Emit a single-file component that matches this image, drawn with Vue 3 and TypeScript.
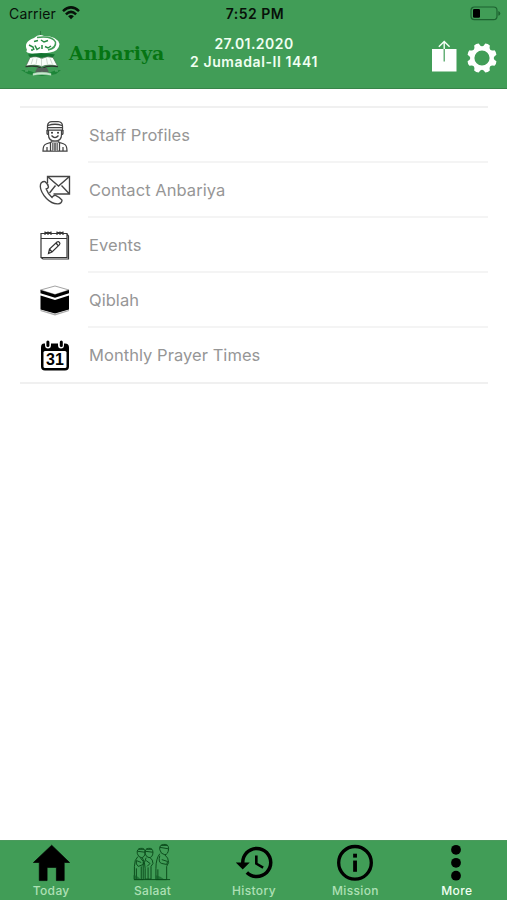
<script setup lang="ts">
type IconName = 'staff' | 'contact' | 'events' | 'qiblah' | 'calendar'

interface MenuItem {
  label: string
  icon: IconName
}

const menu: MenuItem[] = [
  { label: 'Staff Profiles', icon: 'staff' },
  { label: 'Contact Anbariya', icon: 'contact' },
  { label: 'Events', icon: 'events' },
  { label: 'Qiblah', icon: 'qiblah' },
  { label: 'Monthly Prayer Times', icon: 'calendar' },
]

const tabs = ['Today', 'Salaat', 'History', 'Mission', 'More']
const activeTab = 'More'

// Eight-toothed gear outline centred in a 30x30 box.
function gearPath(): string {
  const pt = (deg: number, r: number): string => {
    const a = ((deg - 90) * Math.PI) / 180
    return `${(15 + r * Math.cos(a)).toFixed(2)} ${(15 + r * Math.sin(a)).toFixed(2)}`
  }
  let d = `M${pt(0, 11.7)}`
  for (let i = 0; i < 8; i++) {
    const c = i * 45 + 22.5
    d += `Q${pt(c - 14, 11.8)} ${pt(c - 9.5, 14.8)}Q${pt(c, 15.6)} ${pt(c + 9.5, 14.8)}Q${pt(c + 14, 11.8)} ${pt(c + 22.5, 11.7)}`
  }
  return d + 'ZM22.6 15a7.6 7.6 0 1 0-15.2 0a7.6 7.6 0 1 0 15.2 0Z'
}
const gear = gearPath()
</script>

<template>
  <div class="screen">
    <header class="header">
      <div class="status">
        <div class="carrier">
          <span>Carrier</span>
          <svg class="wifi" viewBox="0 0 18 14" width="18" height="14">
            <g fill="none" stroke="#071109" stroke-width="2.5">
              <path d="M1 5.1Q9-2.3 17 5.1" />
              <path d="M3.9 8.3Q9 3.4 14.1 8.3" />
            </g>
            <path d="M6.1 10.2Q9 7.8 11.9 10.2L9 13.3Z" fill="#071109" />
          </svg>
        </div>
        <div class="clock">7:52 PM</div>
        <svg class="battery" viewBox="0 0 31 15" width="31" height="15">
          <rect x="1" y="1" width="26" height="12.6" rx="3.4" fill="none" stroke="#1d6230" stroke-width="1.2" />
          <rect x="3" y="3" width="7" height="8.7" rx="1.3" fill="#000" />
          <path d="M28.3 5v4.8q2-.7 2-2.4t-2-2.4Z" fill="#1d6230" />
        </svg>
      </div>
      <div class="titlebar">
        <div class="brand">
          <svg class="crest" viewBox="0 0 44 50" width="44" height="50">
            <path d="M20.500 3v5" stroke="#2c7a40" stroke-width="1" />
            <path d="M7 22Q3 14 14 10Q19 5 24 8Q37 8 39.500 16Q39 23 30 24.500Q17 27 9 25Q5 24 7 22Z" fill="#fff" />
            <path d="M17 9.500Q32 7.500 35.500 14Q36.500 20 28 22" fill="none" stroke="#419d57" stroke-width="1.500" />
            <path d="M9 17l4 2 1 3M15 17.500l2 4 3-2M22 17v4M25 18.500l3 1.500 3-2M14 13.500l4-1M21 12l3 2 4-1.500M11 22h2" fill="none" stroke="#258a42" stroke-width="1.500" />
            <path d="M8 26.500Q21 23.500 35 26.500L32.500 29.500H10Z" fill="#137330" />
            <path d="M10 29.500Q17 27.500 21.500 30.500Q27 27.500 33 29.500L37.500 38Q28 36 22 38.500Q15 36 6 38Z" fill="#fafffa" stroke="#4c6b51" stroke-width=".7" />
            <path d="M21.500 30.500v8M13 30.500l-2 6M17 30.500l-1 6M26.500 30.500l1 6M30 30.500l2.500 6" stroke="#c2cfc3" stroke-width=".8" />
            <path d="M5.500 38.700Q16 37 22 40.500Q28 37 38 38.700" fill="none" stroke="#2b352c" stroke-width="1.100" />
            <path d="M17 40h10l2 4.500H15Z" fill="#55615a" />
            <path d="M1 42q9 0 14 3h14q5-3 12-3l-5 4q-14 4-28 0Z" fill="#1d8538" />
            <path d="M13 45.500q9-2.500 18 0v1.800q-9-1.800-18 0ZM5 43h3M35 43h3" fill="#cde8d2" stroke="#a5d3af" stroke-width=".5" />
          </svg>
          <span class="brand-name">Anbariya</span>
        </div>
        <div class="dates">
          <div class="date-line">27.01.2020</div>
          <div class="date-line hijri">2 Jumadal-II 1441</div>
        </div>
        <div class="actions">
          <svg viewBox="0 0 26 32" width="26" height="32">
            <path d="M1 9h24.500v22.500H1Z" fill="#fff" />
            <path d="M13.200 9v12.500" stroke="#419d57" stroke-width="1.200" />
            <path d="M13.200 9V2M7.800 6.800L13.200 1.500l5.400 5.300" fill="none" stroke="#f5fff6" stroke-width="1.400" />
          </svg>
          <svg viewBox="0 0 30 30" width="30" height="30">
            <path :d="gear" fill="#fff" fill-rule="evenodd" />
          </svg>
        </div>
      </div>
    </header>

    <main class="content">
      <ul class="menu">
        <li v-for="item in menu" :key="item.label" class="row">
          <div class="row-icon">
            <svg v-if="item.icon === 'staff'" viewBox="0 0 32 32" width="32" height="32">
              <g fill="none" stroke="#424242" stroke-width="1.250">
                <path d="M8.500 7.500V5.500Q9 1.500 13 1.500h6Q23.500 2 23.500 6v1.500M9 5.500q7-2.500 14 0M8.500 7.500h15v2.500h-15Z" />
                <path d="M9.500 10v5q0 6 6.500 6t6.500-6v-5M9.500 10.500H8v3q0 1 1.500 1M22.500 10.500H24v3q0 1-1.500 1" />
                <path d="M12.500 15.500q3.500 4 7 0" />
                <path d="M12.500 20v2L7 24q-3 1-3 7h24q0-6-3-7l-5.500-2v-2M8 27v4M24 27v4M11.500 22v9M20.500 22v9" />
              </g>
              <path d="M12.500 20.500h7v2h-7ZM13 23h6v8h-6Z" fill="#777" />
              <path d="M14.500 23v8M17.500 23v8" stroke="#aaa" />
              <circle cx="13" cy="12.700" r="1" fill="#333" />
              <circle cx="19" cy="12.700" r="1" fill="#333" />
            </svg>
            <svg v-else-if="item.icon === 'contact'" viewBox="0 0 32 32" width="32" height="32">
              <g fill="none" stroke="#454545" stroke-width="1.350">
                <path d="M8.500 8V1.500h22v17.500H14.500M8.500 1.500l11 9.500 11-9.500M30.500 19l-8-8.500M10.500 18l6-7.500" />
                <path d="M2.300 7.800Q4 6.300 6 6.600q3 2 3.500 5.400-.3 1.500-2.300 2Q9 19 13 22.500q1.500-2.500 3.500-2.200 4.500 2 6.500 4.800-.2 3.300-3.800 3.700Q13 29.200 7.500 23.500 1.500 17 1.300 11.500 1.300 9 2.300 7.800Z" />
              </g>
            </svg>
            <svg v-else-if="item.icon === 'events'" viewBox="0 0 32 32" width="32" height="32">
              <g fill="none" stroke="#343434" stroke-width="1.200">
                <path d="M2 3.500h26v24H2ZM2 8.500h26M2 27.500l2 1.500h25.500V6l-1.500-2" />
                <path d="M6 5V1.500M9 5V1.500M12 5V1.500M18 5V1.500M21 5V1.500M24 5V1.500M6 2.500h6M18 2.500h6" />
                <path d="M9.500 23.500l1-4.500 7.500-7q1.500-.8 2.500.5 1 1-.2 2.400L13 22ZM10.500 19l2.500 3M17 13l2.500 3" />
              </g>
            </svg>
            <svg v-else-if="item.icon === 'qiblah'" viewBox="0 0 32 32" width="32" height="32">
              <path d="M1.500 5L16 1 30 5 16 9.500Z" fill="#fff" stroke="#999" stroke-width=".9" />
              <path d="M1.500 5L16 9.500 30 5v3.200l-14 4.600L1.500 8.200Z" fill="#000" />
              <path d="M1.500 10.400L16 15l14-4.600V24.500L16 28.600 1.500 24.500Z" fill="#000" />
              <path d="M1.500 25.500L16 29.700 30 25.500" fill="none" stroke="#aaa" stroke-width="1.300" />
            </svg>
            <svg v-else viewBox="0 0 32 32" width="32" height="32">
              <path d="M5 3.500h1V5q0 3.500 3 3.500t3-3.500V3.500h7V5q0 3.500 3 3.500t3-3.500V3.500h1q4 0 4 4v19q0 4-4 4H6q-4 0-4-4v-19q0-4 3-4Z" fill="#000" />
              <rect x="7.400" y=".5" width="3" height="6.500" rx="1.500" fill="#000" />
              <rect x="20.800" y=".5" width="3" height="6.500" rx="1.500" fill="#000" />
              <rect x="4.500" y="11" width="23" height="17" rx="1.500" fill="#fff" />
              <text class="day" x="16" y="25.300" text-anchor="middle">31</text>
            </svg>
          </div>
          <div class="row-label">{{ item.label }}</div>
        </li>
      </ul>
    </main>

    <nav class="tabbar">
      <div v-for="tab in tabs" :key="tab" class="tab" :class="{ active: tab === activeTab }">
        <svg v-if="tab === 'Today'" viewBox="0 0 44 44" width="44" height="44">
          <path d="M22.700 4.300L41 22H35.500v18.500H27.500V27H18v13.500H10V22H4Z" fill="#000" stroke="#000" stroke-linejoin="round" stroke-width=".7" />
        </svg>
        <svg v-else-if="tab === 'Salaat'" viewBox="0 0 44 44" width="44" height="44">
          <g fill="none" stroke="#0b4c1c" stroke-width="1">
            <path d="M3.500 39.500h37" />
            <path d="M7 13q-1-5 3.500-5.500T15 12q-.5 5-4 5-3-.5-4-4ZM7 10.500l8 1M8 8.500h6" />
            <path d="M7.500 16Q4 19 4 26v13.500h9V21l-3-4M12 17q3 4 1 7l-5 2q-3-2-2-6l5 2M6 28v11M11 26v13" />
            <path d="M15 13q-1-5 3.500-5.500T23 12q-.5 5-4 5-3-.5-4-4ZM15 10.500l8 1M16 8.500h6" />
            <path d="M16 17q-3 5-1 11v11h6V26l2-3q0-4-3-6M16 20l4 3-3 3M18 27v12" />
            <path d="M30 9q-1-5 4-5.500T39 8q-.5 6-4 6-4-.5-5-5ZM30 6.500l9 1.500M31 4.500h7" />
            <path d="M30 13q-4 5-4 15v11.500h11V26l2-4q0-5-4-8M30 15q-2 7 2 8l5 1 1-3-6-2M28 29v10" />
          </g>
          <path d="M3 35q4 0 7 4H3ZM26 35q5 1 8 4h-8Z" fill="#146229" opacity=".7" />
        </svg>
        <svg v-else-if="tab === 'History'" class="history" viewBox="0 0 24 24" width="42" height="42">
          <path d="M13 3c-4.970 0-9 4.030-9 9H1l3.890 3.890.07.14L9 12H6c0-3.870 3.130-7 7-7s7 3.130 7 7-3.130 7-7 7c-1.930 0-3.680-.79-4.940-2.060l-1.420 1.420C8.270 19.990 10.510 21 13 21c4.970 0 9-4.030 9-9s-4.030-9-9-9zm-1 5v5l4.280 2.540.72-1.210-3.500-2.080V8H12z" fill="#000" />
        </svg>
        <svg v-else-if="tab === 'Mission'" viewBox="0 0 44 44" width="44" height="44">
          <circle cx="22" cy="22.300" r="16.700" fill="none" stroke="#000" stroke-width="3.400" />
          <rect x="20.100" y="13" width="3.900" height="4" fill="#000" />
          <rect x="20.100" y="20" width="3.900" height="11.500" fill="#000" />
        </svg>
        <svg v-else viewBox="0 0 44 44" width="44" height="44">
          <circle cx="22" cy="9" r="5" />
          <circle cx="22" cy="22.300" r="5" />
          <circle cx="22" cy="35.500" r="5" />
        </svg>
        <span class="tab-label">{{ tab }}</span>
      </div>
    </nav>
  </div>
</template>

<style>
body {
  margin: 0;
  background: #fff;
}
</style>

<style scoped>
.screen {
  display: flex;
  flex-direction: column;
  width: 100%;
  height: 100vh;
  overflow: hidden;
  background: #fff;
  font-family: Inter, 'Liberation Sans', sans-serif;
}
svg {
  display: block;
  flex: none;
}
.header {
  height: 89px;
  box-sizing: border-box;
  border-bottom: 1px solid #378449;
  background: #419d57;
}
.status {
  display: grid;
  grid-template-columns: 1fr auto 1fr;
  align-items: center;
  height: 27px;
  padding: 0 6px 0 9px;
  color: #071109;
}
.carrier {
  display: flex;
  align-items: center;
  gap: 6px;
  font-size: 14px;
  letter-spacing: 0.15px;
}
.clock {
  font-size: 14px;
  font-weight: 600;
  letter-spacing: 0.5px;
}
.battery {
  justify-self: end;
}
.wifi {
  margin-top: -1px;
}
.titlebar {
  display: grid;
  grid-template-columns: 189px 130px 1fr;
  height: 61px;
}
.brand {
  display: flex;
  align-items: flex-start;
  padding: 1px 0 0 20px;
}
.brand-name {
  margin: 14px 0 0 5px;
  color: #067513;
  font-family: 'DejaVu Serif', serif;
  font-size: 19px;
  font-weight: 700;
  line-height: 23px;
  letter-spacing: 0.1px;
}
.dates {
  padding-top: 8px;
  color: #f0fff1;
  font-size: 14px;
  font-weight: 600;
  line-height: 18px;
  text-align: center;
  white-space: nowrap;
}
.date-line {
  letter-spacing: 0.45px;
}
.hijri {
  letter-spacing: 0.6px;
}
.actions {
  display: flex;
  justify-content: flex-end;
  align-items: flex-start;
  gap: 10px;
  padding: 13px 10.5px 0 0;
}
.actions svg + svg {
  margin-top: 2.5px;
}
.content {
  flex: 1;
  padding: 17px 19px 0 20px;
}
.menu {
  margin: 0;
  padding: 0;
  border-top: 2px solid #f0f0f0;
  border-bottom: 2px solid #f0f0f0;
  list-style: none;
}
.row {
  display: flex;
  height: 55px;
}
.row-icon {
  width: 68px;
  box-sizing: border-box;
  padding: 12px 0 0 19px;
}
.row-label {
  flex: 1;
  box-sizing: border-box;
  padding-left: 1px;
  border-bottom: 2px solid #f4f4f4;
  color: #969696;
  font-size: 16.5px;
  line-height: 55px;
  letter-spacing: 0.05px;
}
.row:last-child {
  height: 54px;
}
.row:last-child .row-label {
  border-bottom: 0;
}
.day {
  fill: #000;
  font-family: 'Liberation Sans', sans-serif;
  font-size: 16px;
  font-weight: 700;
}
.tabbar {
  display: grid;
  grid-template-columns: repeat(5, 1fr);
  height: 60px;
  box-sizing: border-box;
  border-top: 1px solid #4b9a5d;
  background: #419d57;
}
.tab {
  display: flex;
  flex-direction: column;
  align-items: center;
  color: #aee0b5;
}
.tab > svg {
  height: 43px;
}
.tab > .history {
  margin-left: 3px;
}
.tab-label {
  padding-left: 1px;
  font-size: 12px;
  font-weight: 500;
  line-height: 14px;
  letter-spacing: 0.35px;
}
.active {
  color: #f0fff1;
}
</style>
